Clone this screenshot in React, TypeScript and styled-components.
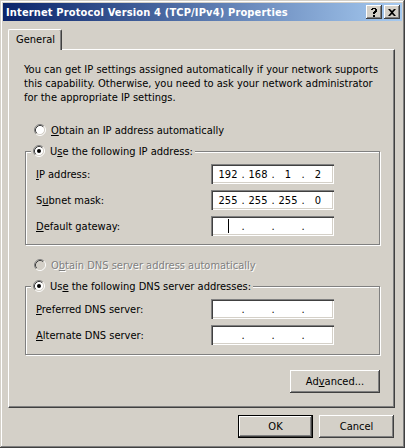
import React from "react";
import styled, { createGlobalStyle, css } from "styled-components";

const GlobalStyle = createGlobalStyle`
  html, body { margin: 0; padding: 0; background: #d4d0c8; }
  body { font-family: "DejaVu Sans Condensed", "Liberation Sans", Arial, sans-serif; font-size: 11px; color: #000; }
  * { box-sizing: border-box; }
`;

const FONT = `"DejaVu Sans Condensed", "Liberation Sans", Arial, sans-serif`;

const Window = styled.div`
  width: 405px;
  height: 448px;
  background: #d4d0c8;
  padding: 3px;
  display: flex;
  flex-direction: column;
  box-shadow: inset -1px -1px 0 #404040, inset 1px 1px 0 #d4d0c8,
    inset -2px -2px 0 #808080, inset 2px 2px 0 #ffffff;
  font-family: ${FONT};
  font-size: 11px;
`;

const TitleBar = styled.div`
  height: 18px;
  background: linear-gradient(to right, #0a246a, #a6caf0);
  display: flex;
  align-items: center;
  padding: 0 2px 0 3px;
`;

const TitleText = styled.div`
  flex: 1;
  color: #fff;
  font-family: ${FONT};
  font-weight: bold;
  font-size: 11px;
  letter-spacing: 0.15px;
  white-space: nowrap;
`;

const raised = css`
  background: #d4d0c8;
  box-shadow: inset -1px -1px 0 #404040, inset 1px 1px 0 #ffffff,
    inset -2px -2px 0 #808080, inset 2px 2px 0 #d4d0c8;
`;

const CaptionButton = styled.div<{ $gap?: boolean }>`
  ${raised};
  width: 16px;
  height: 14px;
  margin-left: ${(p) => (p.$gap ? "2px" : "0")};
  display: flex;
  align-items: center;
  justify-content: center;
`;

const Body = styled.div`
  flex: 1;
  display: flex;
  flex-direction: column;
  padding: 8px 7px 0 5px;
`;

const TabStrip = styled.div`
  display: flex;
  height: 20px;
  position: relative;
  z-index: 1;
`;

const Tab = styled.div`
  width: 54px;
  height: 21px;
  background: #d4d0c8;
  border-top: 1px solid #fff;
  border-left: 1px solid #fff;
  border-right: 1px solid #404040;
  box-shadow: inset -1px 0 0 #808080;
  border-top-left-radius: 2px;
  border-top-right-radius: 2px;
  padding: 3px 0 0 7px;
  font-size: 11px;
`;

const Panel = styled.div`
  height: 359px;
  border-top: 1px solid #fff;
  border-left: 1px solid #fff;
  border-right: 1px solid #404040;
  border-bottom: 1px solid #404040;
  box-shadow: inset -1px -1px 0 #808080;
  padding: 13px 14px 0 15px;
  display: flex;
  flex-direction: column;
`;

const Intro = styled.p`
  margin: 0;
  line-height: 14px;
  font-size: 11px;
`;

const RadioRow = styled.label<{ $disabled?: boolean }>`
  display: flex;
  align-items: center;
  height: 14px;
  gap: 5px;
  padding: 0 2px;
  background: #d4d0c8;
  color: ${(p) => (p.$disabled ? "#808080" : "#000")};
  text-shadow: ${(p) => (p.$disabled ? "1px 1px 0 #fff" : "none")};
  white-space: nowrap;
`;

const StandaloneRadio = styled.div<{ $top: number }>`
  margin-top: ${(p) => p.$top}px;
  padding-left: 8px;
`;

const Group = styled.fieldset<{ $top: number; $height: number }>`
  margin: ${(p) => p.$top}px 0 0 1px;
  width: 355px;
  height: ${(p) => p.$height}px;
  border: 1px solid #808080;
  box-shadow: 1px 1px 0 #fff, inset 1px 1px 0 #fff;
  padding: 6px 0 0 10px;
  display: flex;
  flex-direction: column;
  gap: 6px;
`;

const Legend = styled.legend`
  padding: 0;
  margin-left: -5px;
  background: #d4d0c8;
`;

const FieldRow = styled.div`
  display: flex;
  align-items: center;
  height: 20px;
  justify-content: space-between;
  padding-right: 45px;
`;

const FieldLabel = styled.span`
  white-space: nowrap;
`;

const IpBox = styled.div`
  width: 123px;
  height: 20px;
  background: #fff;
  box-shadow: inset 1px 1px 0 #808080, inset 2px 2px 0 #404040,
    inset -1px -1px 0 #fff, inset -2px -2px 0 #d4d0c8;
  display: flex;
  align-items: center;
  padding-left: 5px;
  position: relative;
`;

const Octet = styled.span`
  width: 24px;
  text-align: center;
`;

const Dot = styled.span`
  width: 6px;
  text-align: center;
`;

const Caret = styled.span`
  position: absolute;
  left: 17px;
  top: 3px;
  width: 1px;
  height: 14px;
  background: #000;
`;

const AdvancedRow = styled.div`
  display: flex;
  justify-content: flex-end;
  margin-top: 15px;
  width: 356px;
`;

const Button = styled.button<{ $default?: boolean; $width: number }>`
  ${raised};
  width: ${(p) => p.$width}px;
  height: 23px;
  border: none;
  padding: 0;
  font-family: ${FONT};
  font-size: 11px;
  color: #000;
  ${(p) =>
    p.$default &&
    css`
      box-shadow: inset 0 0 0 1px #000, inset -2px -2px 0 #404040,
        inset 2px 2px 0 #ffffff, inset -3px -3px 0 #808080;
    `}
`;

const Footer = styled.div`
  display: flex;
  justify-content: flex-end;
  gap: 6px;
  padding: 7px 1px 0 0;
`;

const U = styled.span`
  text-decoration: underline;
  text-underline-offset: 1px;
`;

const RadioIcon: React.FC<{ checked?: boolean; disabled?: boolean }> = ({ checked, disabled }) => (
  <svg width="12" height="12" viewBox="0 0 12 12">
    <circle cx="6" cy="6" r="4.5" fill={disabled ? "#d4d0c8" : "#fff"} />
    <path d="M2.11 9.89 A5.5 5.5 0 0 1 9.89 2.11" stroke="#808080" fill="none" />
    <path d="M9.89 2.11 A5.5 5.5 0 0 1 2.11 9.89" stroke="#fff" fill="none" />
    <path d="M2.82 9.18 A4.5 4.5 0 0 1 9.18 2.82" stroke="#404040" fill="none" />
    <path d="M9.18 2.82 A4.5 4.5 0 0 1 2.82 9.18" stroke="#d4d0c8" fill="none" />
    {checked && <circle cx="6" cy="6" r="2" fill="#000" />}
  </svg>
);

const Radio: React.FC<{ checked?: boolean; disabled?: boolean; children: React.ReactNode }> = ({
  checked,
  disabled,
  children,
}) => (
  <RadioRow $disabled={disabled}>
    <RadioIcon checked={checked} disabled={disabled} />
    <span>{children}</span>
  </RadioRow>
);

const IpField: React.FC<{ octets?: string[]; caret?: boolean }> = ({ octets = ["", "", "", ""], caret }) => (
  <IpBox>
    {caret && <Caret />}
    <Octet>{octets[0]}</Octet>
    <Dot>.</Dot>
    <Octet>{octets[1]}</Octet>
    <Dot>.</Dot>
    <Octet>{octets[2]}</Octet>
    <Dot>.</Dot>
    <Octet>{octets[3]}</Octet>
  </IpBox>
);

export default function App() {
  return (
    <>
      <GlobalStyle />
      <Window>
        <TitleBar>
          <TitleText>Internet Protocol Version 4 (TCP/IPv4) Properties</TitleText>
          <CaptionButton>
            <svg width="8" height="9" viewBox="0 0 8 9">
              <path d="M1 1h1V0h4v1h1v3H6v1H5v1H3V4h1V3h1V1H3v1H1z" fill="#000" />
              <rect x="3" y="7" width="2" height="2" fill="#000" />
            </svg>
          </CaptionButton>
          <CaptionButton $gap>
            <svg width="8" height="7" viewBox="0 0 8 7">
              <path d="M0 0h2l2 2 2-2h2L5 3.5 8 7H6L4 5 2 7H0l3-3.5z" fill="#000" />
            </svg>
          </CaptionButton>
        </TitleBar>
        <Body>
          <TabStrip>
            <Tab>General</Tab>
          </TabStrip>
          <Panel>
            <Intro>
              You can get IP settings assigned automatically if your network supports this capability.
              Otherwise, you need to ask your network administrator for the appropriate IP settings.
            </Intro>
            <StandaloneRadio $top={18}>
              <Radio>
                <U>O</U>btain an IP address automatically
              </Radio>
            </StandaloneRadio>
            <Group $top={7} $height={101}>
              <Legend>
                <Radio checked>
                  U<U>s</U>e the following IP address:
                </Radio>
              </Legend>
              <FieldRow>
                <FieldLabel>
                  <U>I</U>P address:
                </FieldLabel>
                <IpField octets={["192", "168", "1", "2"]} />
              </FieldRow>
              <FieldRow>
                <FieldLabel>
                  S<U>u</U>bnet mask:
                </FieldLabel>
                <IpField octets={["255", "255", "255", "0"]} />
              </FieldRow>
              <FieldRow>
                <FieldLabel>
                  <U>D</U>efault gateway:
                </FieldLabel>
                <IpField caret />
              </FieldRow>
            </Group>
            <StandaloneRadio $top={13}>
              <Radio disabled>
                O<U>b</U>tain DNS server address automatically
              </Radio>
            </StandaloneRadio>
            <Group $top={7} $height={76}>
              <Legend>
                <Radio checked>
                  Us<U>e</U> the following DNS server addresses:
                </Radio>
              </Legend>
              <FieldRow>
                <FieldLabel>
                  <U>P</U>referred DNS server:
                </FieldLabel>
                <IpField />
              </FieldRow>
              <FieldRow>
                <FieldLabel>
                  <U>A</U>lternate DNS server:
                </FieldLabel>
                <IpField />
              </FieldRow>
            </Group>
            <AdvancedRow>
              <Button $width={90}>
                Ad<U>v</U>anced...
              </Button>
            </AdvancedRow>
          </Panel>
          <Footer>
            <Button $default $width={75}>
              OK
            </Button>
            <Button $width={75}>Cancel</Button>
          </Footer>
        </Body>
      </Window>
    </>
  );
}
